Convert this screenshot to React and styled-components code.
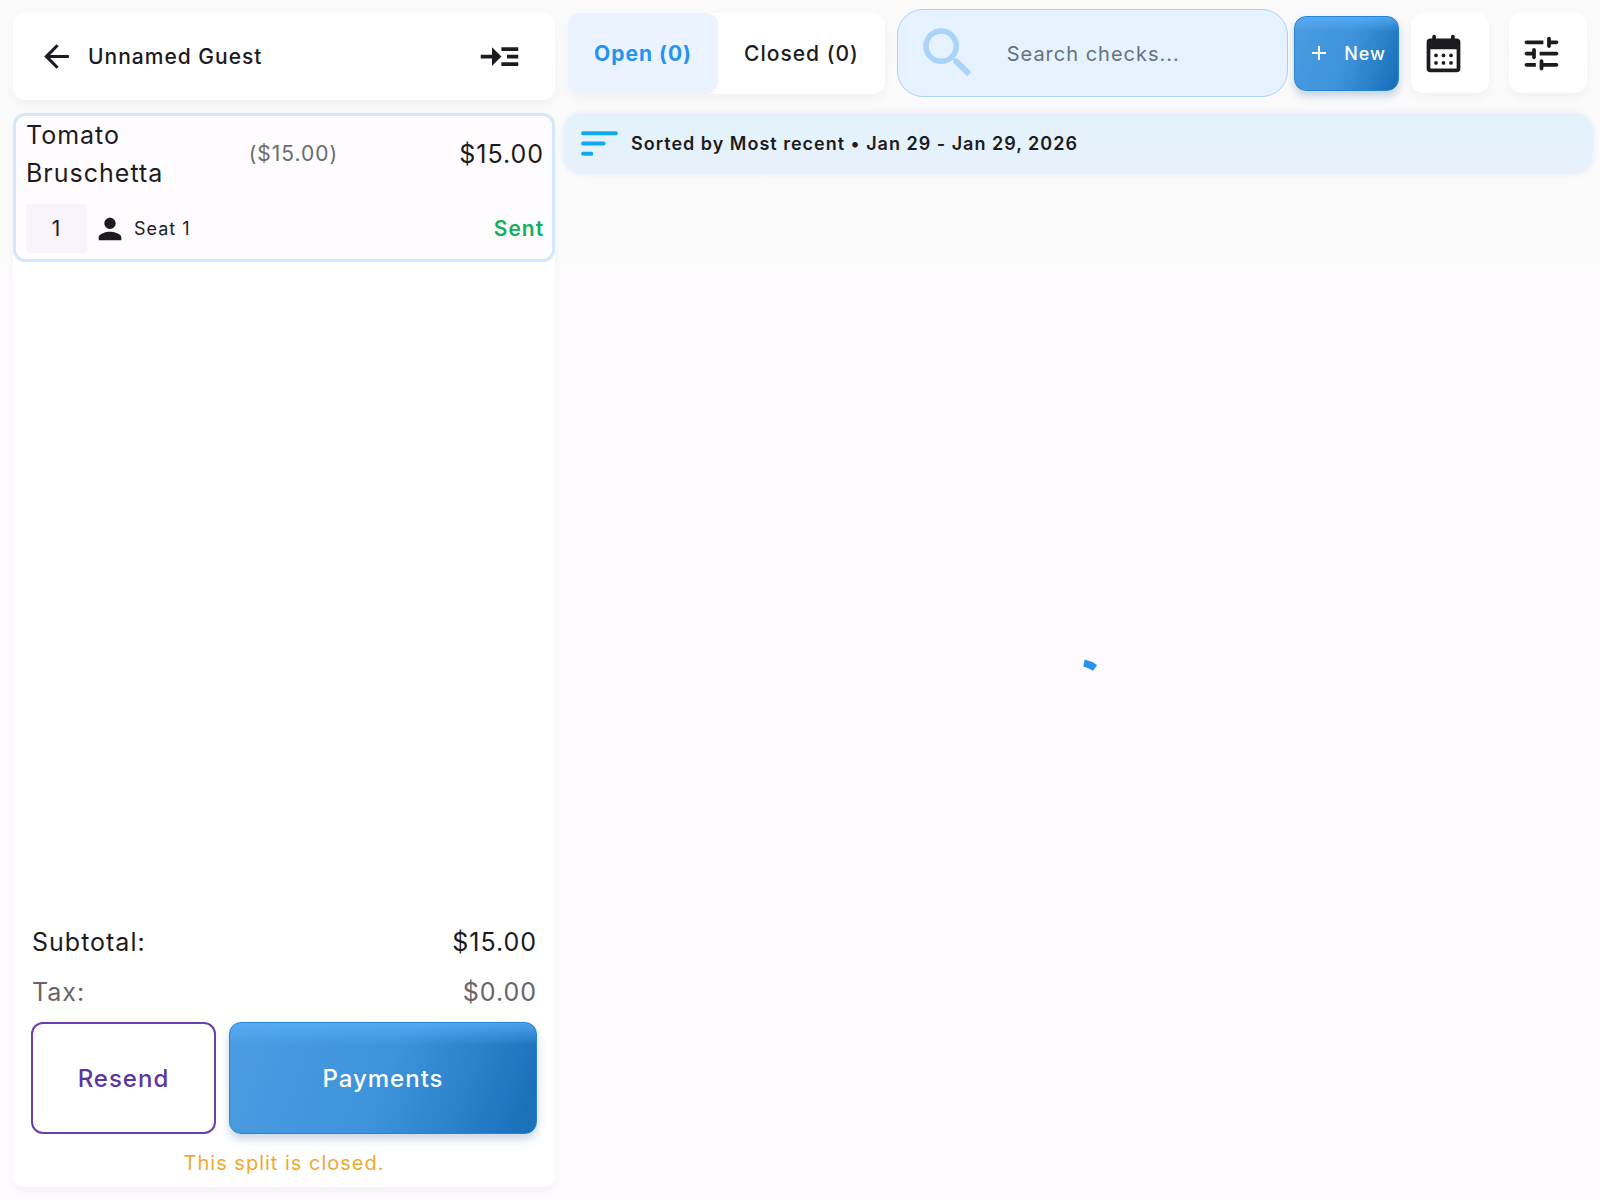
import React from 'react';
import styled, { createGlobalStyle, css } from 'styled-components';
import { MdAdd, MdArrowBack, MdPerson, MdReadMore, MdSearch } from 'react-icons/md';

const GlobalStyle = createGlobalStyle`
*{
    box-sizing:border-box;
}
body{
    margin:0;
    background:#fefafe;
    color:#1d1b20;
    font-family:Inter, Roboto, sans-serif;
    font-size:21px;
    letter-spacing:1px;
}
button, input{
    font:inherit;
    letter-spacing:inherit;
    color:inherit;
}
button{
    border:0;
    padding:0;
    background:none;
    cursor:pointer;
}
svg{
    display:block;
    flex:none;
}
`

const Page = styled.div`
display:grid;
grid-template-columns:minmax(0, 10fr) minmax(0, 19fr);
gap:8px;
min-height:100vh;
padding:0 7px 0 13px;
background:linear-gradient(#fbfafb 0, #fbfbfb 250px, #fefafe 290px);
`

const softShadow = css`
box-shadow:0 5px 10px rgba(40, 30, 50, 0.04);
`

const Check = styled.aside`
display:flex;
flex-direction:column;
gap:13px;
padding:13px 0;
`

const CheckHeader = styled.header`
display:flex;
align-items:center;
height:87px;
padding:0 33px 0 25px;
border-radius:12px;
background:#fff;
${softShadow}
h1{
    flex:1;
    margin:0 0 0 13px;
    font-size:21px;
    font-weight:500;
}
`

const CheckBody = styled.section`
display:flex;
flex:1;
flex-direction:column;
border-radius:12px;
background:#fff;
${softShadow}
`

const Item = styled.article`
height:149px;
padding:0 8px 0 10px;
border:3px solid #d5e8fb;
border-radius:12px;
background:#fefcff;
`

const ItemTop = styled.div`
display:grid;
grid-template-columns:1fr 1fr 1fr;
align-items:center;
height:76px;
font-size:25px;
line-height:38px;
`

const UnitPrice = styled.span`
padding-left:50px;
font-size:21px;
color:#6d6a70;
`

const Amount = styled.span`
text-align:right;
`

const ItemBottom = styled.div`
display:flex;
align-items:center;
margin-top:12px;
font-size:18px;
svg{
    margin:0 7px 0 6px;
}
`

const Quantity = styled.button`
width:61px;
height:49px;
border-radius:4px;
background:#f9f3fb;
font-size:21px;
`

const Status = styled.span`
margin-left:auto;
font-size:21px;
font-weight:600;
color:#12b05c;
`

const Totals = styled.dl`
margin:auto 18px 0 19px;
font-size:25px;
line-height:50px;
`

const TotalRow = styled.div`
display:flex;
justify-content:space-between;
color:${props => props.$muted ? '#68656b' : '#1d1b20'};
dd{
    margin:0;
}
`

const Actions = styled.div`
display:grid;
grid-template-columns:3fr 5fr;
gap:13px;
height:112px;
margin:5px 18px 0;
`

const ResendButton = styled.button`
border:2px solid #6a3eac;
border-radius:12px;
background:#fff;
color:#5b35a5;
font-size:24px;
font-weight:500;
`

const blueFill = css`
border:1px solid #2585d3;
border-radius:12px;
background:linear-gradient(rgba(92, 178, 255, 0.7), rgba(92, 178, 255, 0) 20%), linear-gradient(110deg, #4c9ce0, #3e93dc 50%, #2a82cb 75%, #1b70ba 95%);
box-shadow:0 5px 9px rgba(30, 90, 150, 0.25);
color:#fff;
`

const PaymentsButton = styled.button`
${blueFill}
font-size:24px;
font-weight:500;
`

const Note = styled.p`
margin:13px 0 7px;
font-size:20px;
line-height:33px;
text-align:center;
color:#efa92f;
`

const Checks = styled.main`
display:flex;
flex-direction:column;
padding-top:9px;
`

const Toolbar = styled.div`
display:flex;
align-items:center;
height:88px;
padding:0 6px 0 5px;
`

const Tabs = styled.div`
display:flex;
height:81px;
margin-right:12px;
border-radius:12px;
background:#fff;
${softShadow}
`

const Tab = styled.button`
padding:0 26px;
border-radius:12px;
white-space:nowrap;
font-weight:${props => props.$active ? 700 : 500};
color:${props => props.$active ? '#2793ee' : '#1d1b20'};
background:${props => props.$active ? '#eaf3ff' : 'none'};
`

const SearchBox = styled.label`
display:flex;
flex:1;
align-items:center;
align-self:stretch;
min-width:0;
padding-left:17px;
border:1px solid #a9d4f9;
border-radius:26px;
background:#e6f2ff;
font-size:20px;
svg{
    color:#a9d4f9;
}
input{
    flex:1;
    min-width:0;
    margin-left:26px;
    padding:2px 0 0;
    border:0;
    outline:0;
    background:none;
}
input::placeholder{
    color:#65717f;
    opacity:1;
}
`

const NewButton = styled.button`
${blueFill}
display:flex;
align-items:center;
justify-content:space-between;
width:105px;
height:75px;
margin:0 12px 0 6px;
padding:0 12px;
font-size:18px;
font-weight:500;
`

const IconButton = styled.button`
display:flex;
align-items:center;
width:78px;
height:80px;
padding-left:10px;
border-radius:12px;
background:#fff;
${softShadow}
& + &{
    margin-left:20px;
}
`

const SortBar = styled.div`
display:flex;
align-items:center;
gap:7px;
height:61px;
margin-top:16px;
padding:0 12px;
border-radius:18px;
background:linear-gradient(#e3f3fb, #e7f1fb);
box-shadow:0 0 6px rgba(200, 220, 245, 0.4);
font-size:18px;
font-weight:600;
`

const Loading = styled.div`
display:flex;
flex:1;
align-items:center;
justify-content:center;
`

const CalendarIcon = () => (
    <svg width="45" height="45" viewBox="0 0 24 24" fill="currentColor" aria-hidden="true">
        <path d="M19 4h-1V3a1 1 0 0 0-2 0v1H8V3a1 1 0 0 0-2 0v1H5a2 2 0 0 0-2 2v14a2 2 0 0 0 2 2h14a2 2 0 0 0 2-2V6a2 2 0 0 0-2-2zm0 16H5V9.700h14z" />
        {[8, 12, 16].map(x => [13, 17].map(y => <circle key={`${x}-${y}`} cx={x} cy={y} r="1" />))}
    </svg>
)

const TuneIcon = () => (
    <svg width="45" height="45" viewBox="0 0 24 24" fill="currentColor" aria-hidden="true">
        <path d="M3 18c0 .55.45 1 1 1h5v-2H4c-.55 0-1 .45-1 1zM3 6c0 .55.45 1 1 1h9V5H4c-.55 0-1 .45-1 1zm10 14v-1h7c.55 0 1-.45 1-1s-.45-1-1-1h-7v-1c0-.55-.45-1-1-1s-1 .45-1 1v4c0 .55.45 1 1 1s1-.45 1-1zM7 10v1H4c-.55 0-1 .45-1 1s.45 1 1 1h3v1c0 .55.45 1 1 1s1-.45 1-1v-4c0-.55-.45-1-1-1s-1 .45-1 1zm14 2c0-.55-.45-1-1-1h-9v2h9c.55 0 1-.45 1-1zm-5-3c.55 0 1-.45 1-1V7h3c.55 0 1-.45 1-1s-.45-1-1-1h-3V4c0-.55-.45-1-1-1s-1 .45-1 1v4c0 .55.45 1 1 1z" />
    </svg>
)

const SortIcon = () => (
    <svg width="49" height="49" viewBox="0 0 24 24" fill="none" stroke="#10a9f0" strokeWidth="2" strokeLinecap="round" aria-hidden="true">
        <path d="M4 7h16M4 12h10M4 17h4" />
    </svg>
)

const Spinner = () => (
    <svg width="60" height="60" viewBox="0 0 60 60" role="img" aria-label="Loading">
        <path d="M36 6A27 27 0 0 1 47 11" fill="none" stroke="#2793ee" strokeWidth="7" />
    </svg>
)

const App = () => {
    return (
        <>
            <GlobalStyle />
            <Page>
                <Check>
                    <CheckHeader>
                        <button aria-label="Back"><MdArrowBack size={37} /></button>
                        <h1>Unnamed Guest</h1>
                        <button aria-label="Show details"><MdReadMore size={45} /></button>
                    </CheckHeader>
                    <CheckBody>
                        <Item>
                            <ItemTop>
                                <span>Tomato Bruschetta</span>
                                <UnitPrice>($15.00)</UnitPrice>
                                <Amount>$15.00</Amount>
                            </ItemTop>
                            <ItemBottom>
                                <Quantity>1</Quantity>
                                <MdPerson size={34} />
                                <span>Seat 1</span>
                                <Status>Sent</Status>
                            </ItemBottom>
                        </Item>
                        <Totals>
                            <TotalRow><dt>Subtotal:</dt><dd>$15.00</dd></TotalRow>
                            <TotalRow $muted><dt>Tax:</dt><dd>$0.00</dd></TotalRow>
                        </Totals>
                        <Actions>
                            <ResendButton>Resend</ResendButton>
                            <PaymentsButton>Payments</PaymentsButton>
                        </Actions>
                        <Note>This split is closed.</Note>
                    </CheckBody>
                </Check>
                <Checks>
                    <Toolbar>
                        <Tabs>
                            <Tab $active>Open (0)</Tab>
                            <Tab>Closed (0)</Tab>
                        </Tabs>
                        <SearchBox>
                            <MdSearch size={66} />
                            <input type="text" aria-label="Search checks" placeholder="Search checks..." />
                        </SearchBox>
                        <NewButton><MdAdd size={24} />New</NewButton>
                        <IconButton aria-label="Pick dates"><CalendarIcon /></IconButton>
                        <IconButton aria-label="Filters"><TuneIcon /></IconButton>
                    </Toolbar>
                    <SortBar>
                        <SortIcon />
                        <span>Sorted by Most recent • Jan 29 - Jan 29, 2026</span>
                    </SortBar>
                    <Loading><Spinner /></Loading>
                </Checks>
            </Page>
        </>
    )
}

export default App;
